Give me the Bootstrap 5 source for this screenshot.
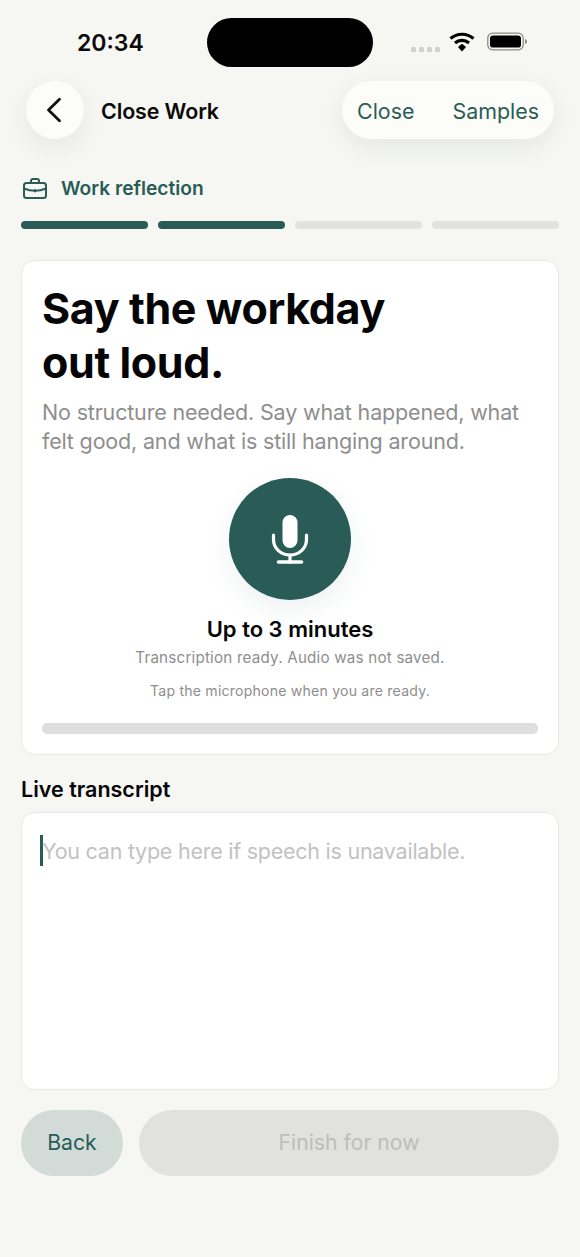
<!doctype html>
<html lang="en">
<head>
<meta charset="utf-8">
<title>Close Work</title>
<link href="https://cdn.jsdelivr.net/npm/bootstrap@5.3.0/dist/css/bootstrap.min.css" rel="stylesheet">
<style>
html,body{height:100%}
body{background:#f6f7f2;font-family:Inter,"Liberation Sans",sans-serif;color:#0a0a0a;width:580px;height:1257px;overflow:hidden}
.status-row{height:81px;padding-top:18px;display:grid;grid-template-columns:207px 166px 207px}
.clock{font-size:23px;font-weight:600;line-height:50px;padding-left:77px}
.island{height:49px;background:#000;border-radius:25px}
.sys-icons{display:flex;align-items:flex-start;padding-left:38px;padding-top:14px}
.dots{display:flex;gap:3px;margin-top:15px;margin-right:9px}
.dots i{width:5px;height:5px;border-radius:1.5px;background:#cfcfcc;display:block}
.head-row{padding:0 26px;height:58px}
.round-back{width:58px;height:58px;border-radius:50%;background:#fcfcf8;box-shadow:0 8px 24px rgba(40,50,45,.08);border:0;padding:0 2px 0 0}
.title-text{font-size:21.4px;font-weight:600;margin-left:17px;padding-top:2px;letter-spacing:-.1px}
.pill-actions{height:58px;border-radius:29px;background:#fcfcf8;box-shadow:0 8px 24px rgba(40,50,45,.08);width:212px;padding:2px 15px 0;font-size:21.4px;color:#2a5c57}
.step-row{padding:0 23px;margin-top:36px;height:26px;color:#2a5c57;font-size:19.2px;font-weight:600}
.step-row span{margin-left:14px}
.bars{padding:0 21px;margin-top:20px;gap:10px}
.bars>div{height:8px;flex:1;border-radius:4px;background:#e2e3de}
.bars>div.on{background:#2a5c57}
.panel{margin:31px 21px 0;background:#fff;border:1px solid #e8e9e4;border-radius:14px;height:495px;padding:20px 20px 0}
.panel h1{font-size:43px;font-weight:700;line-height:54px;margin:0;letter-spacing:-.38px;color:#050505}
.panel .sub{font-size:21.5px;line-height:29px;color:#8e8e8e;margin:9px 0 0;letter-spacing:-.17px}
.mic-btn{width:122px;height:122px;border-radius:50%;background:#2a5c57;border:0;padding:0;margin-top:22px;box-shadow:0 10px 28px rgba(43,95,90,.08)}
.limit{font-size:22px;font-weight:600;line-height:28px;margin-top:15px;color:#050505}
.note-a{font-size:15.2px;line-height:20px;color:#8e8e8e;margin-top:5px;letter-spacing:.2px}
.note-b{font-size:14.1px;line-height:20px;color:#8e8e8e;margin-top:13px;letter-spacing:.2px}
.meter{height:11px;border-radius:5px;background:#dedede;margin-top:22px}
.tr-label{padding:0 21px;font-size:21.5px;font-weight:600;line-height:28px;margin-top:20px;color:#050505}
.tr-box{margin:9px 21px 0;height:278px;background:#fff;border:1px solid #e8e9e4;border-radius:14px;padding:22px 18px;font-size:21.5px;letter-spacing:-.25px;color:#c2c2c2}
.caret-bar{width:3px;height:31px;background:#2a5c57;flex:none;margin-right:-1px}
.foot{padding:0 21px;margin-top:20px;gap:16px}
.foot .btn{height:66px;border-radius:33px;border:0;font-size:21.2px;padding:0}
.foot .btn.btn-back{width:102px;background:#d2dbd7;color:#2a5c57}
.foot .btn.btn-finish{flex:1;background:#e1e2de;color:#bdbdbb;opacity:1}
</style>
</head>
<body>
<div class="status-row">
  <div class="clock">20:34</div>
  <div class="island"></div>
  <div class="sys-icons">
    <div class="dots"><i></i><i></i><i></i><i></i></div>
    <svg width="26" height="20" viewBox="0 0 26 20" fill="none" class="me-2"><path d="M1.500 6.500C8 .8 18 .8 24.500 6.500" stroke="#000" stroke-width="3.200"/><path d="M6 11c4-3.400 10-3.400 14 0" stroke="#000" stroke-width="3.200"/><path d="M9 15l4-3.300 4 3.300-4 4.500z" fill="#000"/></svg>
    <svg width="41" height="20" viewBox="0 0 41 20" class="ms-1"><rect x=".75" y="1.200" width="35.500" height="16.600" rx="5" fill="none" stroke="#8a8a86" stroke-width="1.300"/><rect x="3" y="3.400" width="31" height="12.200" rx="3.200" fill="#000"/><path d="M38 7v5c1.200-.3 2-1.300 2-2.500S39.200 7.300 38 7z" fill="#8a8a86"/></svg>
  </div>
</div>

<div class="head-row d-flex align-items-center justify-content-between">
  <div class="d-flex align-items-center">
    <button class="round-back d-flex align-items-center justify-content-center" type="button" aria-label="Back">
      <svg width="16" height="26" viewBox="0 0 16 26" fill="none"><path d="M13.500 2.200 2.500 13l11 10.800" stroke="#111" stroke-width="2.800" stroke-linecap="round" stroke-linejoin="round"/></svg>
    </button>
    <div class="title-text">Close Work</div>
  </div>
  <div class="pill-actions d-flex align-items-center justify-content-between"><span>Close</span><span>Samples</span></div>
</div>

<div class="step-row d-flex align-items-center">
  <svg width="24" height="21" viewBox="0 0 24 21" fill="none" stroke="#2a5c57" stroke-width="2" stroke-linejoin="round"><rect x="1" y="5" width="22" height="15" rx="2.500"/><path d="M8 5V3a2 2 0 0 1 2-2h4a2 2 0 0 1 2 2v2"/><path d="M1 10.500c7 3 15 3 22 0"/><path d="M12 12v1.500" stroke-linecap="round"/></svg>
  <span>Work reflection</span>
</div>

<div class="bars d-flex">
  <div class="on"></div><div class="on"></div><div></div><div></div>
</div>

<div class="panel">
  <h1>Say the workday<br>out loud.</h1>
  <p class="sub">No structure needed. Say what happened, what felt good, and what is still hanging around.</p>
  <div class="d-flex flex-column align-items-center text-center">
    <button class="mic-btn d-flex align-items-center justify-content-center" type="button" aria-label="Record">
      <svg width="38" height="52" viewBox="0 0 38 52" fill="none" stroke="#fff" stroke-linecap="round"><rect x="11.500" y="2" width="15" height="33" rx="7.500" fill="#fff" stroke="none"/><path d="M2.500 22v4.500C2.500 35.500 10 42 19 42s16.500-6.500 16.500-15.500V22" stroke-width="3.200"/><path d="M19 42v7" stroke-width="3.200"/><path d="M7.500 49h23" stroke-width="3.600"/></svg>
    </button>
    <div class="limit">Up to 3 minutes</div>
    <div class="note-a">Transcription ready. Audio was not saved.</div>
    <div class="note-b">Tap the microphone when you are ready.</div>
  </div>
  <div class="meter"></div>
</div>

<div class="tr-label">Live transcript</div>
<div class="tr-box d-flex align-items-start">
  <div class="caret-bar"></div><div>You can type here if speech is unavailable.</div>
</div>

<div class="foot d-flex">
  <button class="btn btn-back" type="button">Back</button>
  <button class="btn btn-finish" type="button" disabled>Finish for now</button>
</div>
<script src="https://cdn.jsdelivr.net/npm/bootstrap@5.3.0/dist/js/bootstrap.bundle.min.js"></script>
</body>
</html>
